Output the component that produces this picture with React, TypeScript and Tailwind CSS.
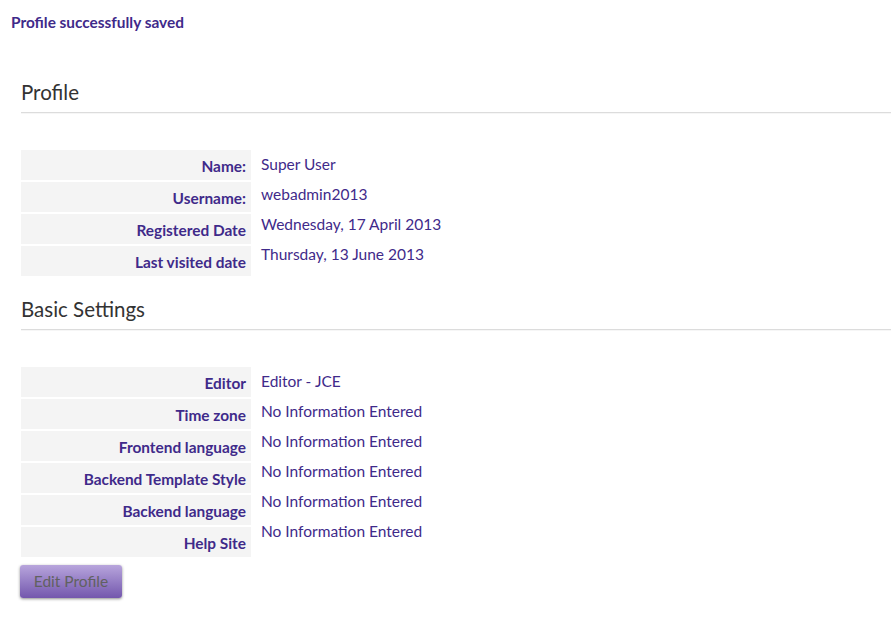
import React from 'react';

type Field = { label: string; value: string };

const profile: Field[] = [
  { label: 'Name:', value: 'Super User' },
  { label: 'Username:', value: 'webadmin2013' },
  { label: 'Registered Date', value: 'Wednesday, 17 April 2013' },
  { label: 'Last visited date', value: 'Thursday, 13 June 2013' },
];

const settings: Field[] = [
  { label: 'Editor', value: 'Editor - JCE' },
  { label: 'Time zone', value: 'No Information Entered' },
  { label: 'Frontend language', value: 'No Information Entered' },
  { label: 'Backend Template Style', value: 'No Information Entered' },
  { label: 'Backend language', value: 'No Information Entered' },
  { label: 'Help Site', value: 'No Information Entered' },
];

// dt cells are 32px apart, dd cells 30px, so the values creep upward row by row
const FieldList: React.FC<{ fields: Field[] }> = ({ fields }) => (
  <div className="flex">
    <div className="w-[230px] flex flex-col">
      {fields.map((f, i) => (
        <div
          key={f.label}
          className={`bg-[#f4f4f4] flex items-end justify-end pr-[5px] pb-[4px] text-[15.4px] leading-[20px] font-bold text-[#3f2a8a] ${
            i > 0 ? 'h-[32px] border-t-2 border-white' : 'h-[30px]'
          }`}
        >
          {f.label}
        </div>
      ))}
    </div>
    <div className="flex flex-col pl-[10px]">
      {fields.map((f) => (
        <div key={f.label} className="h-[30px] flex items-center text-[15.5px] text-[#3f2a8a]">
          {f.value}
        </div>
      ))}
    </div>
  </div>
);

const SectionTitle: React.FC<{ children: React.ReactNode }> = ({ children }) => (
  <div className="border-b border-[#dcdcdc] shadow-[0_1px_0_#f6f6f6] pb-[7px] mb-[37px]">
    <h2 className="text-[20.5px] leading-[26px] text-[#333]">{children}</h2>
  </div>
);

const App: React.FC = () => {
  return (
    <div className="min-h-screen bg-white font-['Lato',sans-serif] pt-[12px]">
      <div className="pl-[11px] text-[15.4px] font-bold text-[#3f2a8a] leading-[20px]">
        Profile successfully saved
      </div>

      <div className="pl-[21px] mt-[47px]">
        <SectionTitle>Profile</SectionTitle>
        <FieldList fields={profile} />

        <div className="mt-[20px]">
          <SectionTitle>Basic Settings</SectionTitle>
        </div>
        <FieldList fields={settings} />

        <button className="mt-[8px] -ml-[1px] w-[102px] h-[33px] rounded-[3px] bg-gradient-to-b from-[#b8a5dc] to-[#7457ad] text-[15.5px] text-[#616161] shadow-[0_1px_3px_rgba(0,0,0,0.45)]">
          Edit Profile
        </button>
      </div>
    </div>
  );
};

export default App;
